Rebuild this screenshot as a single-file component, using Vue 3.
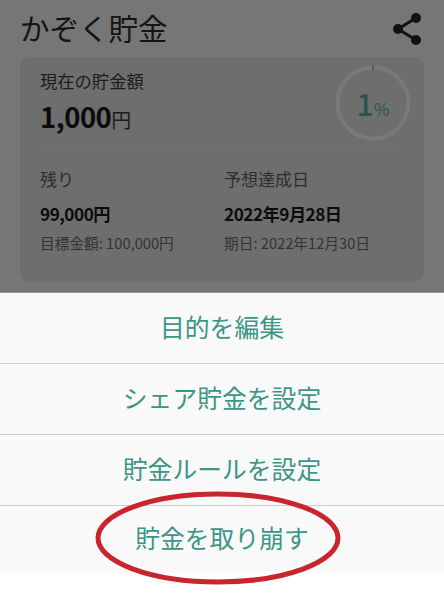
<template>
  <div class="page">
    <section class="backdrop">
      <header class="head">
        <h1 class="title">かぞく貯金</h1>
        <svg class="share" viewBox="0 0 32 36" aria-label="共有">
          <path d="M25 7 L7 18 L25 29" fill="none" stroke="#111" stroke-width="3" />
          <circle cx="25" cy="7" r="5" fill="#111" />
          <circle cx="7" cy="18" r="5" fill="#111" />
          <circle cx="25" cy="29" r="5" fill="#111" />
        </svg>
      </header>
      <div class="card">
        <div class="top">
          <div class="current">
            <div class="label">現在の貯金額</div>
            <div class="amount">1,000<span class="unit">円</span></div>
          </div>
          <div class="ring">
            <svg viewBox="0 0 76 76" class="ring-svg">
              <circle cx="38" cy="38" r="35.5" fill="none" stroke="#797979" stroke-width="4" />
              <path d="M38 0.5 V5" stroke="#2f6058" stroke-width="1.6" />
            </svg>
            <div class="pct">1<span class="pct-sign">%</span></div>
          </div>
        </div>
        <div class="cols">
          <div class="col" v-for="c in cols" :key="c.label">
            <div class="col-label">{{ c.label }}</div>
            <div class="col-value">{{ c.value }}</div>
            <div class="col-sub">{{ c.sub }}</div>
          </div>
        </div>
      </div>
    </section>
    <nav class="sheet">
      <div class="row" v-for="item in items" :key="item"><span class="row-text">{{ item }}</span></div>
    </nav>
    <svg class="mark" viewBox="0 0 250 98">
      <ellipse cx="125" cy="49" rx="120" ry="44" fill="none" stroke="#c9252c" stroke-width="5" />
    </svg>
  </div>
</template>

<script setup>
const cols = [
  { label: '残り', value: '99,000円', sub: '目標金額: 100,000円' },
  { label: '予想達成日', value: '2022年9月28日', sub: '期日: 2022年12月30日' },
]
const items = ['目的を編集', 'シェア貯金を設定', '貯金ルールを設定', '貯金を取り崩す']
</script>

<style>
html, body { margin: 0; background: #fff; }
</style>

<style scoped>
.page {
  position: relative;
  width: 444px;
  height: 600px;
  overflow: hidden;
  background: #fff;
  font-family: "Noto Sans CJK JP", "Noto Sans", sans-serif;
}
.backdrop {
  height: 292px;
  box-sizing: border-box;
  background: #767676;
  padding: 0 20px;
}
.head {
  height: 57px;
  display: flex;
  align-items: center;
  justify-content: space-between;
}
.title {
  margin: 0 0 2px;
  font-size: 29.5px;
  font-weight: 400;
  color: #141414;
  line-height: 1;
}
.share {
  width: 32px;
  height: 36px;
  margin-right: 1px;
}
.card {
  height: 225px;
  box-sizing: border-box;
  background: #6e6e6e;
  border-radius: 10px;
  padding: 0 20px;
}
.top {
  height: 92px;
  display: flex;
  justify-content: space-between;
  border-bottom: 1px solid #747474;
}
.current { padding-top: 13px; }
.label {
  font-size: 17.3px;
  line-height: 22px;
  color: #1c1c1c;
}
.amount {
  font-size: 27.5px;
  line-height: 38px;
  font-weight: 700;
  letter-spacing: -0.5px;
  color: #0c0c0c;
  margin-top: 5px;
}
.unit {
  font-size: 20px;
  font-weight: 400;
  letter-spacing: 0;
  color: #1c1c1c;
}
.ring {
  position: relative;
  width: 76px;
  height: 76px;
  margin: 8px -7px 0 0;
}
.ring-svg { width: 76px; height: 76px; display: block; }
.pct {
  position: absolute;
  inset: 0;
  display: flex;
  align-items: baseline;
  justify-content: center;
  line-height: 76px;
  font-size: 30px;
  font-weight: 500;
  color: #27564e;
}
.pct-sign { font-size: 17px; font-weight: 400; }
.cols {
  display: grid;
  grid-template-columns: 184px 1fr;
  padding-top: 17px;
}
.col-label {
  font-size: 17px;
  line-height: 24px;
  color: #2e2e2e;
}
.col-value {
  font-size: 17.2px;
  line-height: 24px;
  font-weight: 700;
  letter-spacing: -0.5px;
  color: #0c0c0c;
  margin-top: 11px;
}
.col-sub {
  font-size: 14.7px;
  line-height: 20px;
  color: #333;
  margin-top: 7px;
}
.sheet {
  background: #f9f9f9;
  border-top: 1px solid #9a9a9a;
}
.row {
  height: 70px;
  display: flex;
  align-items: center;
  justify-content: center;
  font-size: 24.8px;
  color: #3c9686;
  border-bottom: 1px solid #cfcfcf;
}
.row-text { margin-bottom: 4px; }
.row:last-child { border-bottom: 0; height: 66px; }
.mark {
  position: absolute;
  left: 93px;
  top: 489px;
  width: 250px;
  height: 98px;
}
</style>
